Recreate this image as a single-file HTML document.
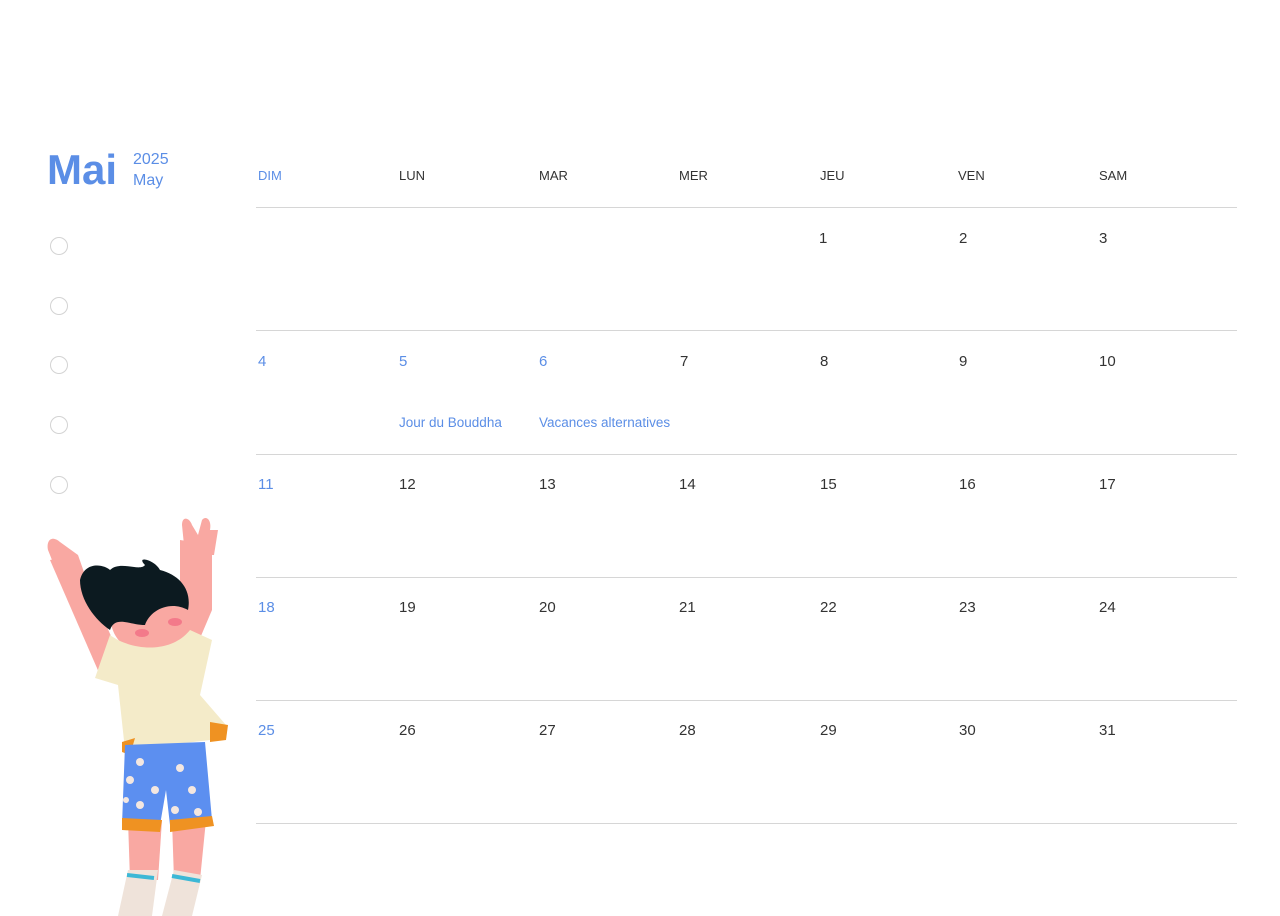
<!DOCTYPE html>
<html><head><meta charset="utf-8"><style>
body{margin:0;width:1280px;height:916px;background:#fff;position:relative;overflow:hidden;font-family:"Liberation Sans",sans-serif;}
.a{position:absolute;white-space:nowrap}
.h{font-size:13px;color:#333;top:168px}
.n{font-size:15px;color:#333}
.b{color:#5b8ee6}
.l{position:absolute;left:256px;width:981px;height:1px;background:#d6d6d6}
.c{position:absolute;left:50px;width:18px;height:18px;border:1px solid #d3d3d3;border-radius:50%;box-sizing:border-box}
</style></head><body>
<div class="a b" style="left:47px;top:146px;font-size:42px;font-weight:bold">Mai</div>
<div class="a b" style="left:133px;top:149px;font-size:16px;line-height:21px">2025<br>May</div>
<div class="c" style="top:237px"></div><div class="c" style="top:297px"></div><div class="c" style="top:356px"></div><div class="c" style="top:416px"></div><div class="c" style="top:476px"></div>
<div class="a h b" style="left:258px">DIM</div><div class="a h" style="left:399px">LUN</div><div class="a h" style="left:539px">MAR</div><div class="a h" style="left:679px">MER</div><div class="a h" style="left:820px">JEU</div><div class="a h" style="left:958px">VEN</div><div class="a h" style="left:1099px">SAM</div>
<div class="l" style="top:207px"></div><div class="l" style="top:330px"></div><div class="l" style="top:454px"></div><div class="l" style="top:577px"></div><div class="l" style="top:700px"></div><div class="l" style="top:823px"></div>
<div class="a n" style="left:819px;top:230px">1</div><div class="a n" style="left:959px;top:230px">2</div><div class="a n" style="left:1099px;top:230px">3</div>
<div class="a n b" style="left:258px;top:353px">4</div><div class="a n b" style="left:399px;top:353px">5</div><div class="a n b" style="left:539px;top:353px">6</div><div class="a n" style="left:680px;top:353px">7</div><div class="a n" style="left:820px;top:353px">8</div><div class="a n" style="left:959px;top:353px">9</div><div class="a n" style="left:1099px;top:353px">10</div>
<div class="a b" style="left:399px;top:415px;font-size:13.5px">Jour du Bouddha</div><div class="a b" style="left:539px;top:415px;font-size:13.5px">Vacances alternatives</div>
<div class="a n b" style="left:258px;top:476px">11</div><div class="a n" style="left:399px;top:476px">12</div><div class="a n" style="left:539px;top:476px">13</div><div class="a n" style="left:679px;top:476px">14</div><div class="a n" style="left:820px;top:476px">15</div><div class="a n" style="left:959px;top:476px">16</div><div class="a n" style="left:1099px;top:476px">17</div>
<div class="a n b" style="left:258px;top:599px">18</div><div class="a n" style="left:399px;top:599px">19</div><div class="a n" style="left:539px;top:599px">20</div><div class="a n" style="left:679px;top:599px">21</div><div class="a n" style="left:820px;top:599px">22</div><div class="a n" style="left:959px;top:599px">23</div><div class="a n" style="left:1099px;top:599px">24</div>
<div class="a n b" style="left:258px;top:722px">25</div><div class="a n" style="left:399px;top:722px">26</div><div class="a n" style="left:539px;top:722px">27</div><div class="a n" style="left:679px;top:722px">28</div><div class="a n" style="left:820px;top:722px">29</div><div class="a n" style="left:959px;top:722px">30</div><div class="a n" style="left:1099px;top:722px">31</div>
<svg style="position:absolute;left:30px;top:500px" width="220" height="416" viewBox="0 0 220 416">
<path d="M98 320 L132 320 L128 380 L100 380 Z" fill="#f9a8a2"/>
<path d="M142 320 L176 320 L170 380 L144 380 Z" fill="#f9a8a2"/>
<path d="M98 370 L128 370 L122 416 L88 416 Z" fill="#efe3da"/>
<path d="M144 370 L172 375 L162 416 L132 416 Z" fill="#efe3da"/>
<path d="M97 375 L124 378" stroke="#3cb8d6" stroke-width="4"/>
<path d="M142 376 L170 381" stroke="#3cb8d6" stroke-width="4"/>
<path d="M20 60 L45 55 L85 145 L70 175 Z" fill="#f9a8a2"/>
<path d="M150 40 L182 45 L182 110 L165 150 L150 130 Z" fill="#f9a8a2"/>
<path d="M18 50 C16 40 22 35 30 42 L48 55 L55 75 L30 80 Z" fill="#f9a8a2"/>
<path d="M152 25 C152 15 160 18 162 25 L168 35 L172 20 C176 15 182 20 180 30 L188 30 L184 55 L155 55 Z" fill="#f9a8a2"/>
<ellipse cx="123" cy="120" rx="42" ry="35" fill="#f9a8a2"/>
<path d="M50 80 C55 60 75 65 80 70 C90 60 110 72 115 65 C105 55 125 60 130 70 C150 75 162 90 158 110 C140 100 120 110 115 125 C100 125 85 115 80 130 C65 120 50 100 50 80Z" fill="#0c1a20"/>
<circle cx="120" cy="75" r="10" fill="#0c1a20"/>
<ellipse cx="112" cy="133" rx="7" ry="4" fill="#f37a8a"/><ellipse cx="145" cy="122" rx="7" ry="4" fill="#f37a8a"/>
<path d="M80 135 C100 150 140 155 160 130 L182 140 L170 195 L196 225 L180 240 L95 250 L88 185 L65 178 Z" fill="#f4ebc9"/>
<path d="M180 222 L198 225 L196 240 L180 242 Z" fill="#ef9222"/>
<path d="M92 242 L105 238 L100 255 L92 252Z" fill="#ef9222"/>
<path d="M95 245 L175 242 L182 320 L140 325 L136 290 L130 325 L92 325 Z" fill="#5c8ff0"/>
<path d="M92 318 L132 320 L130 332 L92 330Z M140 320 L182 316 L184 326 L140 332Z" fill="#ef9222"/>
<g fill="#f4e7e0"><circle cx="110" cy="262" r="4"/><circle cx="150" cy="268" r="4"/><circle cx="100" cy="280" r="4"/><circle cx="125" cy="290" r="4"/><circle cx="162" cy="290" r="4"/><circle cx="110" cy="305" r="4"/><circle cx="145" cy="310" r="4"/><circle cx="168" cy="312" r="4"/><circle cx="96" cy="300" r="3"/></g>
</svg>
</body></html>
